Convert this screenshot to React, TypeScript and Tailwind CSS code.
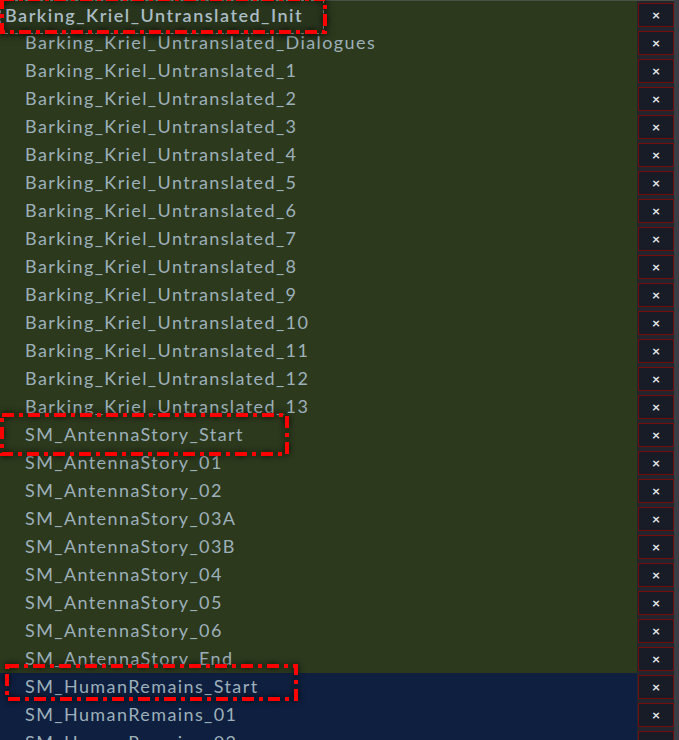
const olive = [
  "Barking_Kriel_Untranslated_Dialogues",
  ...Array.from({ length: 13 }, (_, i) => `Barking_Kriel_Untranslated_${i + 1}`),
  "SM_AntennaStory_Start",
  "SM_AntennaStory_01",
  "SM_AntennaStory_02",
  "SM_AntennaStory_03A",
  "SM_AntennaStory_03B",
  "SM_AntennaStory_04",
  "SM_AntennaStory_05",
  "SM_AntennaStory_06",
  "SM_AntennaStory_End",
];

const blue = ["SM_HumanRemains_Start", "SM_HumanRemains_01", "SM_HumanRemains_02"];

const font = { fontFamily: "Lato, 'Open Sans', sans-serif" };

function CloseButton() {
  return (
    <div className="w-[37px] h-[28px] shrink-0 bg-[#22252c] flex items-center justify-end">
      <button className="w-[36px] h-[24px] bg-[#171c27] border border-[#730c0c] flex items-center justify-center text-[#e6e8ec] text-[14px] font-bold leading-none">
        ×
      </button>
    </div>
  );
}

function Row({ label, tone }: { label: string; tone: "olive" | "blue" }) {
  return (
    <div className="flex h-[28px]">
      <div
        className={`flex-1 h-full pl-[25px] text-[18px] tracking-[1.4px] leading-[26px] text-[#9db0ba] whitespace-nowrap overflow-hidden ${
          tone === "olive" ? "bg-[#2c391d]" : "bg-[#0e1f3f]"
        }`}
      >
        {label}
      </div>
      <CloseButton />
    </div>
  );
}

function Marker({ className, w, h }: { className: string; w: number; h: number }) {
  return (
    <svg
      className={`absolute pointer-events-none ${className}`}
      width={w}
      height={h}
      style={{ filter: "drop-shadow(0 0 3px rgba(0,0,0,0.9))" }}
    >
      <rect x={2} y={2} width={w - 4} height={h - 4} fill="none" stroke="#ff0000" strokeWidth={4} strokeDasharray="12 5 4 5" />
    </svg>
  );
}

export default function App() {
  return (
    <div className="relative h-[740px] w-[679px] overflow-hidden bg-[#3a3d44] flex" style={font}>
      <div className="flex-1 flex flex-col border-t border-[#4a4f48]">
        <div className="flex h-[28px]">
          <div className="relative flex-1 h-full bg-[#2c391d]">
            <div className="absolute left-0 top-[-1px] w-[324px] h-[34px] bg-[#28341c] border border-dashed border-[#8a8f8a] shadow-[0_0_8px_rgba(0,0,0,0.6)] pl-[4px] text-[18px] tracking-[1.5px] leading-[28px] text-[#aabcc4] font-semibold whitespace-nowrap">
              Barking_Kriel_Untranslated_Init
            </div>
          </div>
          <CloseButton />
        </div>
        {olive.map((l) => (
          <Row key={l} label={l} tone="olive" />
        ))}
        {blue.map((l) => (
          <Row key={l} label={l} tone="blue" />
        ))}
      </div>
      <div className="w-[5px] shrink-0 bg-[#3a3d44]" />

      <Marker className="left-0 top-[-3px]" w={327} h={37} />
      <Marker className="left-0 top-[413px]" w={289} h={43} />
      <Marker className="left-[5px] top-[664px]" w={293} h={37} />
    </div>
  );
}
